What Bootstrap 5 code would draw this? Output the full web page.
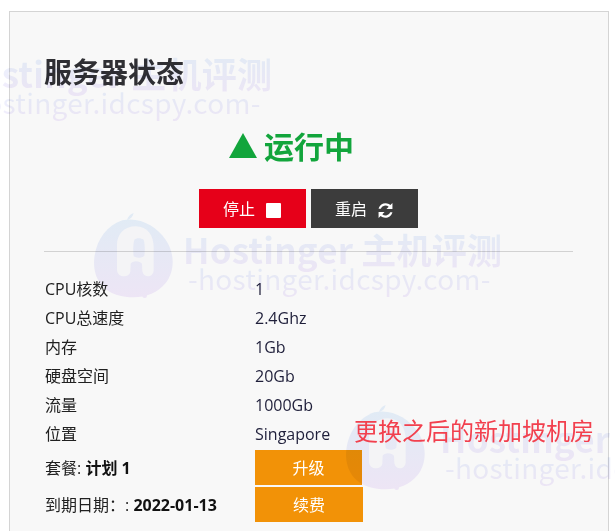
<!DOCTYPE html>
<html lang="zh">
<head>
<meta charset="utf-8">
<link href="https://cdn.jsdelivr.net/npm/bootstrap@5.3.0/dist/css/bootstrap.min.css" rel="stylesheet">
<style>
html,body{height:531px;overflow:hidden;background:#fff}
body{position:relative;font-family:"Open Sans","Noto Sans CJK SC",sans-serif;font-size:16px;color:#212121}
.panel-box{margin:11px 6px 0 9px;height:530px;background:#f8f8f8;border:1px solid #d4d4d4;padding:34px 35px 0 34px}
.wm-layer{position:absolute;left:0;top:0;width:615px;height:531px;overflow:hidden;pointer-events:none;mix-blend-mode:multiply;z-index:2}
.wm{position:absolute;white-space:nowrap;width:330px;height:80px}
.wm-main,.wm-sub{position:absolute;left:0;font-family:"Noto Sans CJK SC",sans-serif;background:linear-gradient(180deg,#e8f2fc,#f3ecfc);-webkit-background-clip:text;background-clip:text;color:transparent}
.wm-main{top:0;font-weight:700;font-size:35px;line-height:46px;letter-spacing:.2px}
.wm-sub{left:5px;top:32px;font-weight:400;font-size:28px;line-height:40px;letter-spacing:.3px}
.wm-logo{position:absolute;width:110px;height:105px}
.box-title{font:700 28px/50px "Noto Sans CJK SC",sans-serif;color:#2f2f33;margin:0;height:50px}
.status-line{font:700 30px/44px "Noto Sans CJK SC",sans-serif;color:#12a53c;margin-top:27px;height:44px;gap:7px;padding-right:34px}
.action-row{margin-top:22px;gap:5px;margin-left:-1px}
.act-btn{width:107px;height:39px;border-radius:0;border:0;color:#fff;font-size:16px;padding:0;display:flex;align-items:center;justify-content:center;gap:11px}
.act-btn svg{margin-top:3px}
.act-stop{background:#e60019}
.act-stop:hover{background:#e60019;color:#fff}
.act-restart{background:#3c3c3c}
.act-restart:hover{background:#3c3c3c;color:#fff}
.rule-line{margin:23px 0 0;border:0;border-top:1px solid #d2d2d2;opacity:1;width:529px}
.spec-list{margin-top:22px}
.spec-row{height:29px;display:flex;align-items:center}
.spec-key{width:211px;padding-left:1px}
.spec-val{color:#1f1f3a}
.spec-row-b{height:37px}
.spec-gap{margin-top:1px}
.spec-row-b b{font-weight:700;color:#111}
.buy-btn{display:flex;align-items:center;justify-content:center;background:#f29207;color:#fff;height:35px;border-radius:0;border:0;padding:0;font-size:16px}
.buy-a{width:107px}
.buy-b{width:108px}
.note-red{position:absolute;left:354px;top:412px;font:400 24px/36px "Noto Sans CJK SC",sans-serif;color:#f2404e;white-space:nowrap;z-index:3}
</style>
</head>
<body>
<div class="panel-box">
  <h2 class="box-title">服务器状态</h2>
  <div class="status-line d-flex justify-content-center align-items-center">
    <svg width="28" height="25" viewBox="0 0 28 25"><path d="M14 0 28 25H0z" fill="#12a53c"/></svg><span>运行中</span>
  </div>
  <div class="action-row d-flex justify-content-center">
    <button class="btn act-btn act-stop" type="button"><span>停止</span><svg width="15" height="15" viewBox="0 0 15 15"><rect width="15" height="15" rx="1" fill="#fff"/></svg></button>
    <button class="btn act-btn act-restart" type="button"><span>重启</span><svg width="15" height="15" viewBox="0 0 16 16"><path d="M15.4 0v6.400H9L11.400 4A5.200 5.200 0 0 0 3 6.200H.6A7.700 7.700 0 0 1 13.200 2.200zM.6 16V9.600H7L4.600 12A5.200 5.200 0 0 0 13 9.800h2.400A7.700 7.700 0 0 1 2.800 13.800z" fill="#fff"/></svg></button>
  </div>
  <hr class="rule-line">
  <div class="spec-list">
    <div class="spec-row"><div class="spec-key">CPU核数</div><div class="spec-val">1</div></div>
    <div class="spec-row"><div class="spec-key">CPU总速度</div><div class="spec-val">2.4Ghz</div></div>
    <div class="spec-row"><div class="spec-key">内存</div><div class="spec-val">1Gb</div></div>
    <div class="spec-row"><div class="spec-key">硬盘空间</div><div class="spec-val">20Gb</div></div>
    <div class="spec-row"><div class="spec-key">流量</div><div class="spec-val">1000Gb</div></div>
    <div class="spec-row"><div class="spec-key">位置</div><div class="spec-val">Singapore</div></div>
    <div class="spec-row spec-row-b spec-gap"><div class="spec-key">套餐: <b>计划 1</b></div><a class="btn buy-btn buy-a" href="#">升级</a></div>
    <div class="spec-row spec-row-b"><div class="spec-key">到期日期：: <b>2022-01-13</b></div><a class="btn buy-btn buy-b" href="#">续费</a></div>
  </div>
</div>
<div class="wm-layer">
  <svg width="0" height="0" class="position-absolute"><defs><linearGradient id="lg" x1="0" y1="0" x2="0" y2="1"><stop offset="0" stop-color="#e8f2fc"/><stop offset="1" stop-color="#f4ecfc"/></linearGradient></defs></svg>
  <div class="wm" style="left:-47px;top:50px"><span class="wm-main">Hostinger 主机评测</span><span class="wm-sub">-hostinger.idcspy.com-</span></div>
  <div class="wm" style="left:183px;top:226px"><span class="wm-main">Hostinger 主机评测</span><span class="wm-sub">-hostinger.idcspy.com-</span></div>
  <div class="wm" style="left:440px;top:415px"><span class="wm-main">Hostinger 主机评测</span><span class="wm-sub">-hostinger.idcspy.com-</span></div>
  <svg class="wm-logo" style="left:85px;top:205px" viewBox="0 0 330 315"><path d="M112 46C66 62 34 104 28 158c-6 56 20 98 68 112 58 16 114 4 146-36 30-40 26-92 0-130-28-40-78-70-130-58z" fill="url(#lg)"/><path d="M96 120c0-32 22-56 56-56 36 0 54 28 54 64v66c0 24-30 28-34 4l-1-22c-6-10-30-10-34 0l-1 24c-4 20-40 18-40-6zM148 104c-4 14-4 36-2 50 8 6 24 6 32-2 2-14 2-36-2-48-8-6-22-6-28 0z" fill="#fbfbfd" fill-rule="evenodd"/><path d="M126 46c2-10 8-18 20-22-2 10-8 18-20 22zM136 52c4-2 8-2 12 0-4 4-8 4-12 0zM172 272a7 7 0 1 0 14 0 7 7 0 1 0-14 0z" fill="url(#lg)"/></svg>
  <svg class="wm-logo" style="left:337px;top:397px" viewBox="0 0 330 315"><path d="M112 46C66 62 34 104 28 158c-6 56 20 98 68 112 58 16 114 4 146-36 30-40 26-92 0-130-28-40-78-70-130-58z" fill="url(#lg)"/><path d="M96 120c0-32 22-56 56-56 36 0 54 28 54 64v66c0 24-30 28-34 4l-1-22c-6-10-30-10-34 0l-1 24c-4 20-40 18-40-6zM148 104c-4 14-4 36-2 50 8 6 24 6 32-2 2-14 2-36-2-48-8-6-22-6-28 0z" fill="#fbfbfd" fill-rule="evenodd"/><path d="M126 46c2-10 8-18 20-22-2 10-8 18-20 22zM136 52c4-2 8-2 12 0-4 4-8 4-12 0zM172 272a7 7 0 1 0 14 0 7 7 0 1 0-14 0z" fill="url(#lg)"/></svg>
</div>
<div class="note-red">更换之后的新加坡机房</div>
<script src="https://cdn.jsdelivr.net/npm/bootstrap@5.3.0/dist/js/bootstrap.bundle.min.js"></script>
</body>
</html>
